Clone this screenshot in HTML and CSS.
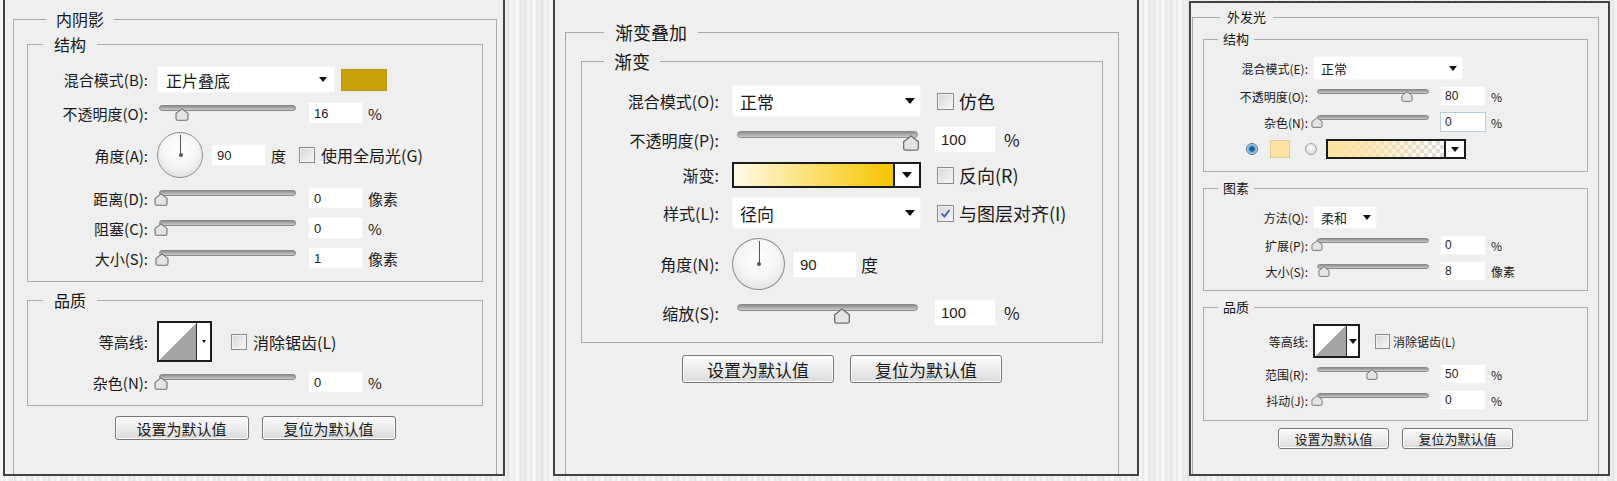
FILE: index.html
```html
<!DOCTYPE html>
<html>

<head>
  <meta charset="UTF-8">
  <title>图层样式</title>
  <link rel="stylesheet" href="styles.css">
</head>

<body>
  <div class="desk">

    <!-- 内阴影 -->
    <div class="panel panel-a">
      <fieldset class="group outer">
        <legend>内阴影</legend>
        <fieldset class="group inner">
          <legend>结构</legend>
          <div class="rows">
            <div class="row">
              <span class="label">混合模式(B):</span>
              <div class="select"><span>正片叠底</span><i class="caret"></i></div>
              <div class="swatch"></div>
            </div>
            <div class="row push">
              <span class="label">不透明度(O):</span>
              <div class="slider"><div class="track"></div><div class="rail"><svg class="knob" style="left:16%" viewBox="0 0 14 12"><path d="M1.5 5 L7 0.8 L12.5 5 V10 Q12.5 11.3 11.2 11.3 H2.8 Q1.5 11.3 1.5 10 Z"/></svg></div></div>
              <div class="field">16</div>
              <span class="unit">%</span>
            </div>
            <div class="row">
              <span class="label">角度(A):</span>
              <div class="dial"></div>
              <div class="field">90</div>
              <span class="unit">度</span>
              <div class="check"></div>
              <span class="opt">使用全局光(G)</span>
            </div>
            <div class="row push">
              <span class="label">距离(D):</span>
              <div class="slider"><div class="track"></div><div class="rail"><svg class="knob" style="left:0%" viewBox="0 0 14 12"><path d="M1.5 5 L7 0.8 L12.5 5 V10 Q12.5 11.3 11.2 11.3 H2.8 Q1.5 11.3 1.5 10 Z"/></svg></div></div>
              <div class="field">0</div>
              <span class="unit">像素</span>
            </div>
            <div class="row">
              <span class="label">阻塞(C):</span>
              <div class="slider"><div class="track"></div><div class="rail"><svg class="knob" style="left:0%" viewBox="0 0 14 12"><path d="M1.5 5 L7 0.8 L12.5 5 V10 Q12.5 11.3 11.2 11.3 H2.8 Q1.5 11.3 1.5 10 Z"/></svg></div></div>
              <div class="field">0</div>
              <span class="unit">%</span>
            </div>
            <div class="row">
              <span class="label">大小(S):</span>
              <div class="slider"><div class="track"></div><div class="rail"><svg class="knob" style="left:0.5%" viewBox="0 0 14 12"><path d="M1.5 5 L7 0.8 L12.5 5 V10 Q12.5 11.3 11.2 11.3 H2.8 Q1.5 11.3 1.5 10 Z"/></svg></div></div>
              <div class="field">1</div>
              <span class="unit">像素</span>
            </div>
          </div>
        </fieldset>
        <fieldset class="group inner quality">
          <legend>品质</legend>
          <div class="rows">
            <div class="row">
              <span class="label">等高线:</span>
              <div class="contour"><div class="curve"></div><div class="drop"><i class="caret"></i></div></div>
              <div class="check"></div>
              <span class="opt">消除锯齿(L)</span>
            </div>
            <div class="row push">
              <span class="label">杂色(N):</span>
              <div class="slider"><div class="track"></div><div class="rail"><svg class="knob" style="left:0%" viewBox="0 0 14 12"><path d="M1.5 5 L7 0.8 L12.5 5 V10 Q12.5 11.3 11.2 11.3 H2.8 Q1.5 11.3 1.5 10 Z"/></svg></div></div>
              <div class="field">0</div>
              <span class="unit">%</span>
            </div>
          </div>
        </fieldset>
        <div class="btns">
          <div class="btn">设置为默认值</div>
          <div class="btn">复位为默认值</div>
        </div>
      </fieldset>
    </div>

    <!-- 渐变叠加 -->
    <div class="panel panel-b">
      <fieldset class="group outer">
        <legend>渐变叠加</legend>
        <fieldset class="group inner">
          <legend>渐变</legend>
          <div class="rows">
            <div class="row">
              <span class="label">混合模式(O):</span>
              <div class="select"><span>正常</span><i class="caret"></i></div>
              <div class="check"></div>
              <span class="opt">仿色</span>
            </div>
            <div class="row">
              <span class="label">不透明度(P):</span>
              <div class="slider"><div class="track"></div><div class="rail"><svg class="knob" style="left:100%" viewBox="0 0 14 12"><path d="M1.5 5 L7 0.8 L12.5 5 V10 Q12.5 11.3 11.2 11.3 H2.8 Q1.5 11.3 1.5 10 Z"/></svg></div></div>
              <div class="field">100</div>
              <span class="unit">%</span>
            </div>
            <div class="row">
              <span class="label">渐变:</span>
              <div class="grad"><div class="fill"></div><div class="drop"><i class="caret"></i></div></div>
              <div class="check"></div>
              <span class="opt">反向(R)</span>
            </div>
            <div class="row">
              <span class="label">样式(L):</span>
              <div class="select"><span>径向</span><i class="caret"></i></div>
              <div class="check on"><svg viewBox="0 0 17 17"><path d="M4 8.5 L7.2 12 L13 4.5"/></svg></div>
              <span class="opt">与图层对齐(I)</span>
            </div>
            <div class="row">
              <span class="label">角度(N):</span>
              <div class="dial"></div>
              <div class="field">90</div>
              <span class="unit">度</span>
            </div>
            <div class="row">
              <span class="label">缩放(S):</span>
              <div class="slider"><div class="track"></div><div class="rail"><svg class="knob" style="left:60%" viewBox="0 0 14 12"><path d="M1.5 5 L7 0.8 L12.5 5 V10 Q12.5 11.3 11.2 11.3 H2.8 Q1.5 11.3 1.5 10 Z"/></svg></div></div>
              <div class="field">100</div>
              <span class="unit">%</span>
            </div>
          </div>
        </fieldset>
        <div class="btns">
          <div class="btn">设置为默认值</div>
          <div class="btn">复位为默认值</div>
        </div>
      </fieldset>
    </div>

    <!-- 外发光 -->
    <div class="panel panel-c">
      <fieldset class="group outer">
        <legend>外发光</legend>
        <fieldset class="group inner">
          <legend>结构</legend>
          <div class="rows">
            <div class="row">
              <span class="label">混合模式(E):</span>
              <div class="select"><span>正常</span><i class="caret"></i></div>
            </div>
            <div class="row">
              <span class="label">不透明度(O):</span>
              <div class="slider"><div class="track"></div><div class="rail"><svg class="knob" style="left:80%" viewBox="0 0 14 12"><path d="M1.5 5 L7 0.8 L12.5 5 V10 Q12.5 11.3 11.2 11.3 H2.8 Q1.5 11.3 1.5 10 Z"/></svg></div></div>
              <div class="field">80</div>
              <span class="unit">%</span>
            </div>
            <div class="row">
              <span class="label">杂色(N):</span>
              <div class="slider"><div class="track"></div><div class="rail"><svg class="knob" style="left:0%" viewBox="0 0 14 12"><path d="M1.5 5 L7 0.8 L12.5 5 V10 Q12.5 11.3 11.2 11.3 H2.8 Q1.5 11.3 1.5 10 Z"/></svg></div></div>
              <div class="field focus">0</div>
              <span class="unit">%</span>
            </div>
            <div class="row colors">
              <div class="radio on"></div>
              <div class="swatch"></div>
              <div class="radio"></div>
              <div class="grad"><div class="fill"></div><div class="drop"><i class="caret"></i></div></div>
            </div>
          </div>
        </fieldset>
        <fieldset class="group inner">
          <legend>图素</legend>
          <div class="rows">
            <div class="row">
              <span class="label">方法(Q):</span>
              <div class="select short"><span>柔和</span><i class="caret"></i></div>
            </div>
            <div class="row">
              <span class="label">扩展(P):</span>
              <div class="slider"><div class="track"></div><div class="rail"><svg class="knob" style="left:0%" viewBox="0 0 14 12"><path d="M1.5 5 L7 0.8 L12.5 5 V10 Q12.5 11.3 11.2 11.3 H2.8 Q1.5 11.3 1.5 10 Z"/></svg></div></div>
              <div class="field">0</div>
              <span class="unit">%</span>
            </div>
            <div class="row">
              <span class="label">大小(S):</span>
              <div class="slider"><div class="track"></div><div class="rail"><svg class="knob" style="left:6%" viewBox="0 0 14 12"><path d="M1.5 5 L7 0.8 L12.5 5 V10 Q12.5 11.3 11.2 11.3 H2.8 Q1.5 11.3 1.5 10 Z"/></svg></div></div>
              <div class="field">8</div>
              <span class="unit">像素</span>
            </div>
          </div>
        </fieldset>
        <fieldset class="group inner">
          <legend>品质</legend>
          <div class="rows">
            <div class="row">
              <span class="label">等高线:</span>
              <div class="contour"><div class="curve"></div><div class="drop"><i class="caret"></i></div></div>
              <div class="check"></div>
              <span class="opt">消除锯齿(L)</span>
            </div>
            <div class="row">
              <span class="label">范围(R):</span>
              <div class="slider"><div class="track"></div><div class="rail"><svg class="knob" style="left:49%" viewBox="0 0 14 12"><path d="M1.5 5 L7 0.8 L12.5 5 V10 Q12.5 11.3 11.2 11.3 H2.8 Q1.5 11.3 1.5 10 Z"/></svg></div></div>
              <div class="field">50</div>
              <span class="unit">%</span>
            </div>
            <div class="row">
              <span class="label">抖动(J):</span>
              <div class="slider"><div class="track"></div><div class="rail"><svg class="knob" style="left:0%" viewBox="0 0 14 12"><path d="M1.5 5 L7 0.8 L12.5 5 V10 Q12.5 11.3 11.2 11.3 H2.8 Q1.5 11.3 1.5 10 Z"/></svg></div></div>
              <div class="field">0</div>
              <span class="unit">%</span>
            </div>
          </div>
        </fieldset>
        <div class="btns">
          <div class="btn">设置为默认值</div>
          <div class="btn">复位为默认值</div>
        </div>
      </fieldset>
    </div>

  </div>
</body>

</html>
```

FILE: styles.css
```css
* {
  box-sizing: border-box;
}

body {
  margin: 0;
  width: 1617px;
  height: 481px;
  overflow: hidden;
  font-family: "Noto Sans CJK SC", "Noto Sans", sans-serif;
  color: #1a1a1a;
  background-color: #ececec;
  background-image: repeating-linear-gradient(90deg, #f4f4f4 0 3px, #e3e3e3 4px, #f8f8f8 6px 8px, #e6e6e6 10px, #efefef 12px 14px, #dedede 15px, #f3f3f3 17px);
}

.desk {
  display: flex;
  align-items: flex-start;
}

/* panels */

.panel {
  flex: none;
  height: 476px;
  background: #efefef;
  border: 2px solid #434343;
  border-top: none;
  overflow: hidden;
}

.panel-a {
  width: 502px;
  margin-left: 3px;
  padding: 10px 0 0 8px;
}

.panel-b {
  width: 586px;
  margin-left: 48px;
  padding: 22px 0 0 10px;
}

.panel-c {
  width: 421px;
  height: 475px;
  margin-left: 50px;
  margin-top: 1px;
  padding: 6px 0 0 1px;
  border-top: 2px solid #434343;
}

/* groups */

.group {
  margin: 0;
  padding: 0;
  min-width: 0;
  border: 1px solid #aaaaaa;
}

.group legend {
  padding: 0;
  color: #161616;
}

.outer {
  height: 520px;
}

.rows {
  display: flex;
  flex-direction: column;
}

.row {
  display: flex;
  align-items: center;
  white-space: nowrap;
}

.label {
  flex: none;
  text-align: right;
}

/* controls */

.select {
  flex: none;
  display: flex;
  align-items: center;
  justify-content: space-between;
  background: #fff;
  border: 1px solid #f5f5f5;
}

.caret {
  display: block;
  width: 0;
  height: 0;
  border-left: 4px solid transparent;
  border-right: 4px solid transparent;
  border-top: 5px solid #111;
}

.field {
  flex: none;
  display: flex;
  align-items: center;
  background: #fff;
  border: 1px solid #f2f2f2;
  font-family: "Liberation Sans", Arial, sans-serif;
  color: #222;
}

.field.focus {
  border-color: #b9cde0;
}

.slider {
  flex: none;
  position: relative;
}

.track {
  border-radius: 4px;
  border: 1px solid #8a8a8a;
  background: linear-gradient(#8d8d8d, #a9a9a9 45%, #cbcbcb);
}

.rail {
  position: absolute;
}

.knob {
  position: absolute;
  top: 0;
  transform: translateX(-50%);
  overflow: visible;
}

.knob path {
  fill: #e4e4e4;
  stroke: #6f6f6f;
  stroke-width: 1;
}

.check {
  flex: none;
  border: 1px solid #8c8c8c;
  background: linear-gradient(135deg, #d6d6d6, #f9f9f9);
  box-shadow: inset 0 0 0 1px #f1f1f1;
}

.check svg {
  display: block;
  width: 100%;
  height: 100%;
}

.check svg path {
  fill: none;
  stroke: #3a5fa6;
  stroke-width: 2;
}

.dial {
  flex: none;
  position: relative;
  border-radius: 50%;
  border: 1px solid #8d8d8d;
  background: radial-gradient(circle at 50% 38%, #fff 0%, #f5f5f5 50%, #d6d6d6 100%);
}

.dial::before {
  content: "";
  position: absolute;
  left: 50%;
  top: 2px;
  bottom: 50%;
  width: 1px;
  background: #555;
}

.dial::after {
  content: "";
  position: absolute;
  left: 50%;
  top: 50%;
  width: 4px;
  height: 4px;
  margin: -2px 0 0 -1.5px;
  border-radius: 50%;
  background: #555;
}

.swatch {
  flex: none;
}

.contour {
  flex: none;
  display: flex;
  border: 2px solid #1d1d1d;
  background: #fff;
}

.curve {
  flex: 1;
  border-right: 1px solid #2a2a2a;
  background: linear-gradient(to top left, #a4a4a4 50%, #fff 50%);
}

.drop {
  flex: none;
  display: flex;
  align-items: center;
  justify-content: center;
  background: #fff;
}

.contour .caret {
  border-left-width: 2px;
  border-right-width: 2px;
  border-top-width: 3px;
}

.grad {
  flex: none;
  display: flex;
  border: 2px solid #1c1c1c;
}

.grad .fill {
  flex: 1;
  border-right: 2px solid #1c1c1c;
}

.radio {
  flex: none;
  width: 12px;
  height: 12px;
  border-radius: 50%;
  border: 1px solid #a0a0a0;
  background: radial-gradient(circle at 45% 40%, #fff, #cfcfcf);
}

.radio.on {
  border-color: #54738c;
  background: radial-gradient(circle, #1f5a8c 0 2px, #5c9cd0 3px, #bcdcf2 5px);
}

.btns {
  display: flex;
  justify-content: center;
}

.btn {
  display: flex;
  align-items: center;
  justify-content: center;
  border: 1px solid #777;
  border-radius: 3px;
  background: linear-gradient(#fbfbfb, #ececec 50%, #dadada);
  box-shadow: inset 0 0 0 1px #fdfdfd;
  color: #1a1a1a;
}

/* 内阴影 */

.panel-a .outer {
  width: 484px;
  padding: 7px 13px 0;
}

.panel-a .outer > legend {
  margin-left: 19px;
  padding: 0 10px;
  font-size: 16px;
  line-height: 18px;
}

.panel-a .inner {
  padding: 13px 0 12px;
}

.panel-a .inner > legend {
  margin-left: 15px;
  padding: 0 11px;
  font-size: 16px;
  line-height: 18px;
}

.panel-a .quality {
  margin-top: 9px;
  padding: 12px 0;
}

.panel-a .rows {
  gap: 8px;
}

.panel-a .row.push {
  margin-top: 1px;
}

.panel-a .label {
  width: 120px;
  margin-right: 9px;
  font-size: 15px;
}

.panel-a .select {
  width: 178px;
  height: 27px;
  padding: 0 7px 0 8px;
  font-size: 16px;
}

.panel-a .swatch {
  width: 46px;
  height: 22px;
  margin-left: 6px;
  background: #c9a10c;
  border: 1px solid #b8930a;
}

.panel-a .slider {
  width: 143px;
  height: 20px;
  padding-top: 2px;
}

.panel-a .track {
  height: 6px;
  margin: 0 4px 0 2px;
}

.panel-a .rail {
  left: 4px;
  right: 8px;
  top: 5px;
}

.panel-a .knob {
  width: 16px;
  height: 13px;
}

.panel-a .field {
  width: 55px;
  height: 22px;
  margin-left: 8px;
  padding-left: 5px;
  font-size: 13px;
}

.panel-a .unit {
  margin-left: 5px;
  font-size: 15px;
}

.panel-a .dial {
  width: 46px;
  height: 46px;
}

.panel-a .check {
  width: 16px;
  height: 16px;
  margin-left: 13px;
}

.panel-a .contour + .check {
  margin-left: 19px;
}

.panel-a .opt {
  margin-left: 6px;
  font-size: 16px;
}

.panel-a .contour {
  width: 55px;
  height: 41px;
}

.panel-a .contour .drop {
  width: 13px;
}

.panel-a .btns {
  margin-top: 10px;
  gap: 13px;
}

.panel-a .btn {
  width: 134px;
  height: 24px;
  font-size: 15px;
}

/* 渐变叠加 */

.panel-b .outer {
  width: 554px;
  padding: 9px 15px 0;
}

.panel-b .outer > legend {
  margin-left: 23px;
  padding: 0 11px;
  font-size: 18px;
  line-height: 20px;
}

.panel-b .inner {
  padding: 14px 0 16px;
}

.panel-b .inner > legend {
  margin-left: 22px;
  padding: 0 10px;
  font-size: 18px;
  line-height: 20px;
}

.panel-b .rows {
  gap: 9px;
}

.panel-b .label {
  width: 137px;
  margin-right: 13px;
  font-size: 16px;
}

.panel-b .select {
  width: 189px;
  height: 32px;
  padding: 0 5px 0 7px;
  font-size: 17px;
}

.panel-b .caret {
  border-left-width: 5px;
  border-right-width: 5px;
  border-top-width: 6px;
}

.panel-b .slider {
  width: 194px;
  height: 24px;
  padding-top: 3px;
}

.panel-b .track {
  height: 7px;
  margin: 0 8px 0 5px;
}

.panel-b .rail {
  left: 7px;
  right: 15px;
  top: 7px;
}

.panel-b .knob {
  width: 19px;
  height: 16px;
}

.panel-b .field {
  width: 62px;
  height: 27px;
  margin-left: 8px;
  padding-left: 6px;
  font-size: 15px;
}

.panel-b .unit {
  margin-left: 8px;
  font-size: 17px;
}

.panel-b .dial + .field {
  width: 64px;
}

.panel-b .dial + .field + .unit {
  margin-left: 4px;
}

.panel-b .check {
  width: 17px;
  height: 17px;
  margin-left: 16px;
}

.panel-b .opt {
  margin-left: 5px;
  font-size: 18px;
}

.panel-b .dial {
  width: 53px;
  height: 52px;
}

.panel-b .grad {
  width: 189px;
  height: 26px;
}

.panel-b .grad .fill {
  background: linear-gradient(90deg, #fffbea, #fbe27a 45%, #f7c400);
}

.panel-b .grad .drop {
  width: 24px;
}

.panel-b .btns {
  margin-top: 12px;
  gap: 16px;
}

.panel-b .btn {
  width: 152px;
  height: 28px;
  font-size: 17px;
}

/* 外发光 */

.panel-c .outer {
  width: 407px;
  padding: 6px 10px 0;
}

.panel-c .outer > legend {
  margin-left: 17px;
  padding: 0 7px;
  font-size: 13px;
  line-height: 16px;
}

.panel-c .inner {
  margin-top: 8px;
  padding: 10px 0 9px;
}

.panel-c .inner:first-of-type {
  margin-top: 0;
  padding: 9px 0 12px;
}

.panel-c .inner:last-of-type {
  padding: 9px 0 10px;
}

.panel-c .inner > legend {
  margin-left: 14px;
  padding: 0 5px;
  font-size: 13px;
  line-height: 16px;
}

.panel-c .rows {
  gap: 6px;
}

.panel-c .label {
  width: 104px;
  margin-right: 5px;
  font-size: 12px;
}

.panel-c .select {
  width: 150px;
  height: 24px;
  padding: 0 5px 0 7px;
  font-size: 13px;
}

.panel-c .select.short {
  width: 64px;
  height: 23px;
}

.panel-c .caret {
  border-left-width: 4px;
  border-right-width: 4px;
  border-top-width: 5px;
}

.panel-c .slider {
  width: 120px;
  height: 16px;
  padding-top: 1px;
}

.panel-c .track {
  height: 5px;
  margin: 0 4px;
}

.panel-c .rail {
  left: 4px;
  right: 4px;
  top: 3px;
}

.panel-c .knob {
  width: 14px;
  height: 11px;
}

.panel-c .field {
  width: 46px;
  height: 20px;
  margin-left: 7px;
  padding-left: 4px;
  font-size: 12px;
}

.panel-c .unit {
  margin-left: 5px;
  font-size: 12px;
}

.panel-c .row.colors {
  margin-top: 1px;
  padding-left: 42px;
}

.panel-c .swatch {
  width: 20px;
  height: 18px;
  margin-left: 12px;
  background: #fee3a2;
  border: 1px solid #e0cc95;
}

.panel-c .radio + .grad {
  margin-left: 9px;
}

.panel-c .swatch + .radio {
  margin-left: 15px;
}

.panel-c .grad {
  width: 140px;
  height: 20px;
}

.panel-c .grad .fill {
  background: linear-gradient(90deg, #fde2a0, rgba(253, 226, 160, 0.8) 30%, rgba(253, 226, 160, 0)), repeating-conic-gradient(#dcdcdc 0 25%, #fff 0 50%) 0 0 / 8px 8px;
}

.panel-c .grad .drop {
  width: 18px;
}

.panel-c .contour {
  width: 47px;
  height: 34px;
}

.panel-c .contour .drop {
  width: 11px;
}

.panel-c .check {
  width: 15px;
  height: 15px;
  margin-left: 15px;
}

.panel-c .opt {
  margin-left: 3px;
  font-size: 12px;
}

.panel-c .btns {
  margin-top: 7px;
  gap: 13px;
}

.panel-c .btn {
  width: 111px;
  height: 21px;
  font-size: 13px;
}
```
